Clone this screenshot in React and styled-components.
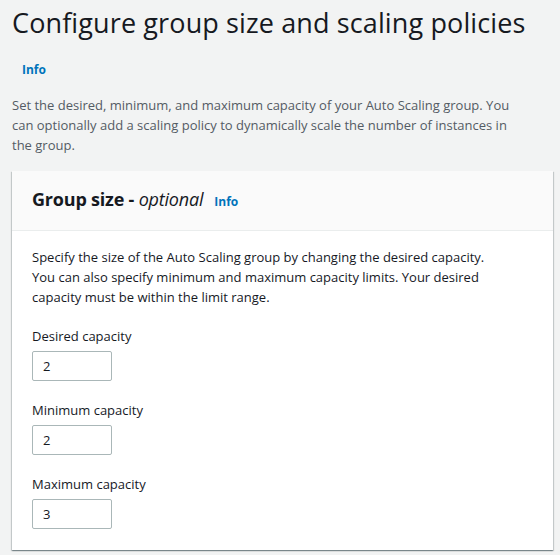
import React from 'react';
import styled, { createGlobalStyle } from 'styled-components';

const GlobalStyle = createGlobalStyle`
  html, body {
    margin: 0;
    padding: 0;
    background-color: #f2f3f3;
    font-family: "Open Sans", "Noto Sans", Arial, sans-serif;
    color: #16191f;
  }
`;

const Page = styled.div`
  width: 560px;
  height: 555px;
  padding: 3px 7px 0 12px;
  box-sizing: border-box;
  overflow: hidden;
`;

const Title = styled.h1`
  margin: 0;
  font-size: 27px;
  font-weight: 400;
  line-height: 40px;
  letter-spacing: 0.12px;
  color: #16191f;
`;

const InfoLink = styled.a`
  font-size: 12px;
  font-weight: 700;
  line-height: 20px;
  color: #0073bb;
  text-decoration: none;
  cursor: pointer;
`;

const TitleInfo = styled.div`
  margin-top: 15px;
  padding-left: 10px;
  line-height: 20px;
`;

const Description = styled.p`
  max-width: 510px;
  margin: 15px 0 0;
  font-size: 13px;
  line-height: 20px;
  color: #545b64;
`;

const Card = styled.section`
  margin-top: 16px;
  background: #fff;
  box-shadow: 0 1px 1px 0 rgba(0, 28, 36, 0.3), 1px 1px 1px 0 rgba(0, 28, 36, 0.15),
    -1px 1px 1px 0 rgba(0, 28, 36, 0.15);
`;

const CardHeader = styled.header`
  display: flex;
  align-items: baseline;
  gap: 11px;
  padding: 17px 20px 18px;
  background: #fafafa;
  border-bottom: 1px solid #eaeded;
`;

const CardTitle = styled.h2`
  margin: 0;
  font-size: 18px;
  font-weight: 700;
  line-height: 22px;
  letter-spacing: -0.2px;

  em {
    font-weight: 400;
  }
`;

const CardBody = styled.div`
  padding: 16px 20px 21px;
`;

const BodyText = styled.p`
  max-width: 465px;
  margin: 0;
  font-size: 13px;
  line-height: 20px;
`;

const Fields = styled.div`
  display: flex;
  flex-direction: column;
  gap: 19px;
  margin-top: 19px;
`;

const Field = styled.label`
  display: flex;
  flex-direction: column;
  align-items: flex-start;
  gap: 5px;
  font-size: 13px;
  line-height: 20px;
`;

const NumberInput = styled.input`
  width: 80px;
  height: 30px;
  box-sizing: border-box;
  margin: 0;
  padding: 0 10px;
  border: 1px solid #aab7b8;
  border-radius: 2px;
  outline: none;
  font-family: inherit;
  font-size: 13px;
  color: #16191f;
  background: #fff;
`;

const fields = [
  { label: 'Desired capacity', value: '2' },
  { label: 'Minimum capacity', value: '2' },
  { label: 'Maximum capacity', value: '3' },
];

const App = () => {
  return (
    <Page>
      <GlobalStyle />
      <Title>Configure group size and scaling policies</Title>
      <TitleInfo>
        <InfoLink>Info</InfoLink>
      </TitleInfo>
      <Description>
        Set the desired, minimum, and maximum capacity of your Auto Scaling group. You can
        optionally add a scaling policy to dynamically scale the number of instances in the group.
      </Description>
      <Card>
        <CardHeader>
          <CardTitle>
            Group size - <em>optional</em>
          </CardTitle>
          <InfoLink>Info</InfoLink>
        </CardHeader>
        <CardBody>
          <BodyText>
            Specify the size of the Auto Scaling group by changing the desired capacity. You can
            also specify minimum and maximum capacity limits. Your desired capacity must be within
            the limit range.
          </BodyText>
          <Fields>
            {fields.map((f) => (
              <Field key={f.label}>
                {f.label}
                <NumberInput type="text" defaultValue={f.value} readOnly />
              </Field>
            ))}
          </Fields>
        </CardBody>
      </Card>
    </Page>
  );
};

export default App;
